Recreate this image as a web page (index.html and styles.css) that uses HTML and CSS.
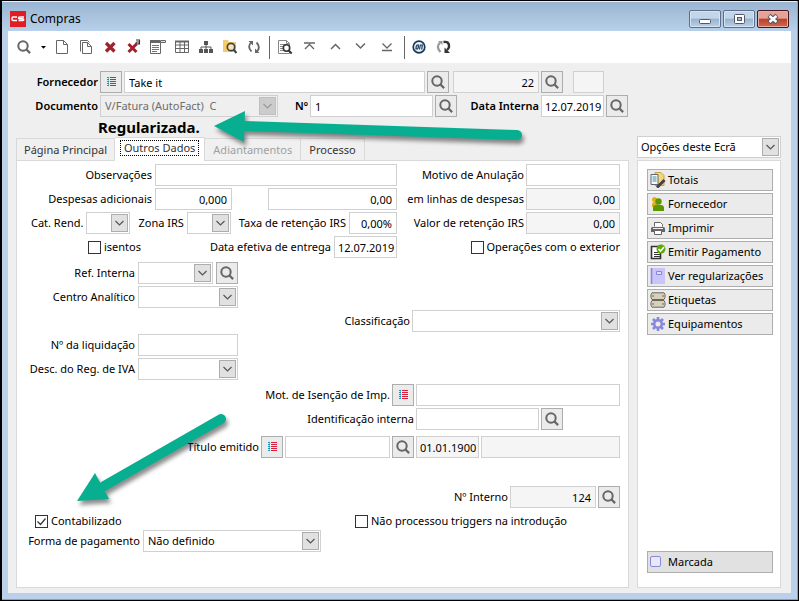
FILE: index.html
```html
<!DOCTYPE html>
<html lang="pt">
<head>
<meta charset="utf-8">
<meta name="viewport" content="width=device-width, initial-scale=1">
<title>Compras</title>
<link rel="stylesheet" href="styles.css">
</head>
<body>
<svg class="defs" aria-hidden="true">
  <symbol id="search" viewBox="0 0 16 16"><circle cx="7" cy="7" r="4.7" fill="none" stroke="#666" stroke-width="2"/><path d="M10.5 10.5l3.6 3.6" stroke="#666" stroke-width="2.2"/></symbol>
</svg>
<div class="window">
  <header class="titlebar">
    <svg class="logo" viewBox="0 0 16 16" aria-hidden="true"><rect width="16" height="16" fill="#e31b23"/><path d="M7 6H3.200Q2 6 2 7v1.500q0 1 1.200 1H7M14 6H9.800Q8.500 6 8.500 6.900q0 .9 1.300.9h2.700q1.200 0 1.200.9t-1.200.9H8.500" fill="none" stroke="#fff" stroke-width="1.500"/></svg>
    <h1>Compras</h1>
    <div class="caption">
      <button type="button" aria-label="Minimizar"><svg viewBox="0 0 30 16"><rect x="9.500" y="8.500" width="11" height="4" rx="1" fill="#fff" stroke="#535666"/></svg></button>
      <button type="button" aria-label="Maximizar"><svg viewBox="0 0 30 16"><rect x="10.500" y="3.500" width="10" height="9" rx="1" fill="#fff" stroke="#535666"/><rect x="13.500" y="6.500" width="4" height="3" fill="#a9bfd6" stroke="#535666"/></svg></button>
      <button type="button" class="close" aria-label="Fechar"><svg viewBox="0 0 30 16"><path d="M11 4.500l8 7M19 4.500l-8 7" stroke="#535666" stroke-width="4.500"/><path d="M11.500 5l7 6M18.500 5l-7 6" stroke="#fff" stroke-width="2.500"/></svg></button>
    </div>
  </header>
  <main class="client">
    <nav class="toolbar" aria-label="Ferramentas">
      <button type="button" aria-label="Procurar"><svg viewBox="0 0 16 16"><use href="#search"/></svg></button>
      <button type="button" class="narrow" aria-label="Mais"><svg viewBox="0 0 16 16"><path d="M6 7h5L8.500 9.700z" fill="#000"/></svg></button>
      <button type="button" aria-label="Novo"><svg viewBox="0 0 16 16"><path d="M2.500 1.500h7l4 4v9h-11zM9.500 1.500v4h4" fill="#fff" stroke="#666"/></svg></button>
      <button type="button" aria-label="Duplicar"><svg viewBox="0 0 16 16"><path d="M4.500 3.500h5l4 4v7h-9zM9.500 3.500v4h4M2.500 12.500v-11h7l2 2" fill="none" stroke="#666"/></svg></button>
      <button type="button" aria-label="Eliminar"><svg viewBox="0 0 16 16"><path d="M4 4l8.500 8.500M12.500 4L4 12.500" stroke="#a3202d" stroke-width="3.200"/></svg></button>
      <button type="button" aria-label="Eliminar todos"><svg viewBox="0 0 16 16"><path d="M2.500 5l8 8M10.500 5l-8 8" stroke="#a3202d" stroke-width="3"/><path d="M10 1h3.500v4.500M13.500 3H11q-1 0-1 1t1 1h1.500l1-1" fill="none" stroke="#333" stroke-width="1.100"/></svg></button>
      <button type="button" aria-label="Formulário"><svg viewBox="0 0 16 16"><path d="M.5 3.500h10v11H.5z" fill="#fff" stroke="#666"/><path d="M0 1h10v3H0z" fill="#666"/><path d="M10.500 1.500h5v2h-5z" fill="#ddd" stroke="#666"/><path d="M2 6.500h7M2 8.500h7M2 10.500h7M2 12.500h5" stroke="#777"/></svg></button>
      <button type="button" aria-label="Tabela"><svg viewBox="0 0 16 16"><path d="M1.500 2.500h13v11h-13zM1.500 6h13M1.500 9.500h13M6 2.500v11M10.500 2.500v11" fill="none" stroke="#666"/><path d="M1 2.500h14" stroke="#666" stroke-width="2"/></svg></button>
      <button type="button" aria-label="Hierarquia"><svg viewBox="0 0 16 16"><path d="M6 2h4v4H6zM1 10h4v4H1zM6 10h4v4H6zM11 10h4v4h-4z" fill="#555"/><path d="M8 6v4M3 10V8h10v2" fill="none" stroke="#555"/></svg></button>
      <button type="button" aria-label="Explorar"><svg viewBox="0 0 16 16"><path d="M1 1h5l1 2h7v10H1z" fill="#f3cd6c"/><circle cx="9" cy="8" r="3.700" fill="#f8e5b0" stroke="#444" stroke-width="1.700"/><path d="M11.500 10.500l3 3.500" stroke="#444" stroke-width="2"/></svg></button>
      <button type="button" aria-label="Atualizar"><svg viewBox="0 0 16 16"><path d="M5.500 12.500Q1 8 5 3.500M10.500 3.500Q15 8 11 12.500" fill="none" stroke="#666" stroke-width="1.800"/><path d="M2.500 2H7v4.500zM13.500 14H9V9.500z" fill="#666"/></svg></button>
      <i class="sep"></i>
      <button type="button" aria-label="Pré-visualizar"><svg viewBox="0 0 16 16"><path d="M1.500 1.500h8l3 3v10h-11zM9.500 1.500v3h3M3 5.500h6M3 7.500h4M3 9.500h3M3 11.500h3" fill="none" stroke="#888"/><circle cx="9.500" cy="9" r="3.200" fill="#fff" stroke="#333" stroke-width="1.600"/><path d="M11.700 11.500l3 3" stroke="#333" stroke-width="2"/></svg></button>
      <button type="button" class="wide" aria-label="Primeiro"><svg viewBox="0 0 16 16"><path d="M2 4h11M3 10l4.500-4.500L12 10" fill="none" stroke="#666" stroke-width="1.300"/></svg></button>
      <button type="button" class="wide" aria-label="Anterior"><svg viewBox="0 0 16 16"><path d="M3 10l4.500-4.500L12 10" fill="none" stroke="#666" stroke-width="1.500"/></svg></button>
      <button type="button" class="wide" aria-label="Seguinte"><svg viewBox="0 0 16 16"><path d="M2 4.500L6.500 9 11 4.500" fill="none" stroke="#666" stroke-width="1.500"/></svg></button>
      <button type="button" class="wide" aria-label="Último"><svg viewBox="0 0 16 16"><path d="M2 11.500h10M2.500 4.500L7 9l4.500-4.500" fill="none" stroke="#666" stroke-width="1.300"/></svg></button>
      <i class="sep"></i>
      <button type="button" aria-label="Ligado"><svg viewBox="0 0 16 16"><circle cx="7" cy="8" r="5.800" fill="#e8f1f8" stroke="#18395c" stroke-width="1.700"/><path d="M6.300 6H5.200l-1 1.500-.2 2.500h1.500l.8-1.500zM7.500 10.500L8.300 6h2l-.6 4.500" fill="none" stroke="#18395c" stroke-width="1.200"/></svg></button>
      <button type="button" aria-label="Repor"><svg viewBox="0 0 16 16"><path d="M4.500 13Q-.5 8 4 3.500" fill="none" stroke="#999" stroke-width="2.200"/><path d="M7.500 3q6-1 5.500 5-.5 2-2 3" fill="none" stroke="#333" stroke-width="2.400"/><path d="M8.500 8.500v5.500H14z" fill="#333"/><path d="M2 2h4.500v4z" fill="#999"/></svg></button>
    </nav>

    <section class="head" aria-label="Cabeçalho">
      <div class="row">
        <label class="lb-head" for="forn">Fornecedor</label>
        <button type="button" class="sq" aria-label="Lista de fornecedores"><svg viewBox="0 0 16 16"><path d="M4 3h2v1H4zM4 5h2v1H4zM4 7h2v1H4zM4 9h2v1H4zM4 11h2v1H4z" fill="#1a96b4"/><path d="M5 4h1v1H5zM5 6h1v1H5zM5 8h1v1H5zM5 10h1v1H5z" fill="#7fc3d3"/><path d="M7 3h6v1H7zM7 5h6v1H7zM7 7h6v1H7zM7 9h6v1H7zM7 11h6v1H7z" fill="#d8213f"/></svg></button>
        <input class="w-name" id="forn" value="Take it">
        <button type="button" class="sq" aria-label="Procurar fornecedor"><svg><use href="#search"/></svg></button>
        <input class="w-code num ro" aria-label="Código" value="22" readonly>
        <button type="button" class="sq" aria-label="Procurar código"><svg><use href="#search"/></svg></button>
        <input class="w-tiny ro" aria-label="Extra" readonly>
      </div>
      <div class="row">
        <label class="lb-head" for="doc">Documento</label>
        <select class="w-doc" id="doc" disabled><option>V/Fatura (AutoFact)&nbsp; C</option></select>
        <label class="lb-num" for="num">Nº</label>
        <input class="w-mid" id="num" value="1">
        <button type="button" class="sq" aria-label="Procurar número"><svg><use href="#search"/></svg></button>
        <label class="lb-date" for="datai">Data Interna</label>
        <input class="w-date" id="datai" value="12.07.2019">
        <button type="button" class="sq" aria-label="Procurar data"><svg><use href="#search"/></svg></button>
      </div>
      <p class="status">Regularizada.</p>
    </section>

    <div class="body">
      <section class="left">
        <div class="tabs" role="tablist">
          <button type="button" role="tab">Página Principal</button>
          <button type="button" role="tab" class="on" aria-selected="true"><span>Outros Dados</span></button>
          <button type="button" role="tab" disabled>Adiantamentos</button>
          <button type="button" role="tab">Processo</button>
        </div>
        <form class="panel">
          <div class="row">
            <label class="lb-a" for="obs">Observações</label>
            <input class="w-obs" id="obs">
            <div class="end"><label for="mot">Motivo de Anulação</label><input class="w-val" id="mot"></div>
          </div>
          <div class="row">
            <label class="lb-a" for="desp">Despesas adicionais</label>
            <div class="pairbox"><input class="w-amt num" id="desp" value="0,000"><input class="w-amt2 num" aria-label="Valor das despesas" value="0,00"></div>
            <div class="end"><label for="lin">em linhas de despesas</label><input class="w-val num ro" id="lin" value="0,00" readonly></div>
          </div>
          <div class="row">
            <div class="half">
              <div class="pair"><label for="cat">Cat. Rend.</label><select class="w-sm" id="cat"><option></option></select></div>
              <div class="pair"><label for="zona">Zona IRS</label><select class="w-sm" id="zona"><option></option></select></div>
              <div class="pair"><label for="taxa">Taxa de retenção IRS</label><input class="w-pct num" id="taxa" value="0,00%"></div>
            </div>
            <div class="end"><label for="ret">Valor de retenção IRS</label><input class="w-val num ro" id="ret" value="0,00" readonly></div>
          </div>
          <div class="row">
            <div class="half spread">
              <label class="check isentos"><input type="checkbox">isentos</label>
              <div class="pair"><label for="efe">Data efetiva de entrega</label><input class="w-date" id="efe" value="12.07.2019"></div>
            </div>
            <label class="check end"><input type="checkbox">Operações com o exterior</label>
          </div>
          <div class="row block">
            <label class="lb-b" for="ref">Ref. Interna</label>
            <select class="w-ref" id="ref"><option></option></select>
            <button type="button" class="sq" aria-label="Procurar referência"><svg><use href="#search"/></svg></button>
          </div>
          <div class="row">
            <label class="lb-b" for="cen">Centro Analítico</label>
            <select class="w-std" id="cen"><option></option></select>
          </div>
          <div class="row">
            <div class="end"><label for="cla">Classificação</label><select class="w-class" id="cla"><option></option></select></div>
          </div>
          <div class="row">
            <label class="lb-b" for="liq">Nº da liquidação</label>
            <input class="w-std" id="liq">
          </div>
          <div class="row">
            <label class="lb-b" for="iva">Desc. do Reg. de IVA</label>
            <select class="w-std" id="iva"><option></option></select>
          </div>
          <div class="row block">
            <div class="end"><label for="ise">Mot. de Isenção de Imp.</label>
              <button type="button" class="sq" aria-label="Lista de motivos"><svg viewBox="0 0 16 16"><path d="M4 3h2v1H4zM4 5h2v1H4zM4 7h2v1H4zM4 9h2v1H4zM4 11h2v1H4z" fill="#1a96b4"/><path d="M5 4h1v1H5zM5 6h1v1H5zM5 8h1v1H5zM5 10h1v1H5z" fill="#7fc3d3"/><path d="M7 3h6v1H7zM7 5h6v1H7zM7 7h6v1H7zM7 9h6v1H7zM7 11h6v1H7z" fill="#d8213f"/></svg></button>
              <div class="col"><input class="grow" id="ise"></div></div>
          </div>
          <div class="row">
            <div class="end"><label for="ide">Identificação interna</label>
              <div class="col"><input class="w-mid" id="ide"><button type="button" class="sq" aria-label="Procurar identificação"><svg><use href="#search"/></svg></button></div></div>
          </div>
          <div class="row title-row">
            <div class="end"><label for="tit">Título emitido</label>
              <button type="button" class="sq" aria-label="Lista de títulos"><svg viewBox="0 0 16 16"><path d="M4 3h2v1H4zM4 5h2v1H4zM4 7h2v1H4zM4 9h2v1H4zM4 11h2v1H4z" fill="#1a96b4"/><path d="M5 4h1v1H5zM5 6h1v1H5zM5 8h1v1H5zM5 10h1v1H5z" fill="#7fc3d3"/><path d="M7 3h6v1H7zM7 5h6v1H7zM7 7h6v1H7zM7 9h6v1H7zM7 11h6v1H7z" fill="#d8213f"/></svg></button>
              <input class="w-tit" id="tit">
              <button type="button" class="sq" aria-label="Procurar título"><svg><use href="#search"/></svg></button>
              <div class="col"><input class="w-date ro" aria-label="Data do título" value="01.01.1900" readonly><input class="grow ro" aria-label="Descrição do título" readonly></div></div>
          </div>
          <div class="row foot">
            <div class="end"><label for="nin">Nº Interno</label><input class="w-code num ro" id="nin" value="124" readonly>
              <button type="button" class="sq" aria-label="Procurar interno"><svg><use href="#search"/></svg></button></div>
          </div>
          <div class="row marks">
            <label class="check contab"><input type="checkbox" checked>Contabilizado</label>
            <label class="check"><input type="checkbox">Não processou triggers na introdução</label>
          </div>
          <div class="row pay">
            <label class="lb-pay" for="pag">Forma de pagamento</label>
            <select class="w-doc" id="pag"><option>Não definido</option></select>
          </div>
          <svg class="arrow arrow-low" viewBox="0 0 170 110" aria-hidden="true"><path d="M148 15L31 82" stroke="#08ae90" stroke-width="10" stroke-linecap="round"/><path d="M4 97l18-28 14 26z" fill="#08ae90"/></svg>
        </form>
      </section>

      <aside class="side">
        <select class="options" aria-label="Opções"><option>Opções deste Ecrã</option></select>
        <div class="actions">
          <button type="button"><svg viewBox="0 0 16 16"><path d="M5 .500h6l3 3v10H5z" fill="#f5d67b" stroke="#c7a245"/><path d="M1 2.500h7v10H1z" fill="#f5fbff" stroke="#666"/><path d="M2.500 5h4M2.500 7h4M2.500 9h4" stroke="#3e8baa"/><path d="M14.500 8L8 14.500l-1 1" stroke="#444" stroke-width="3"/></svg>Totais</button>
          <button type="button"><svg viewBox="0 0 16 16"><circle cx="4.500" cy="3.500" r="2.500" fill="#e2ae18"/><path d="M2 11V8q0-2 3-2h3v5z" fill="#e2ae18"/><circle cx="8.500" cy="5.500" r="3.200" fill="#5b9800"/><path d="M3 15v-3q0-3 3-3h5q3 0 3 3v3z" fill="#5b9800"/></svg>Fornecedor</button>
          <button type="button"><svg viewBox="0 0 16 16"><path d="M4.500 6.500v-4h6l2 2v2" fill="#fff" stroke="#666"/><path d="M1 12V8.500Q1 7 2.500 7h11Q15 7 15 8.500V12z" fill="#666"/><path d="M3 8.500h10" stroke="#eee"/><path d="M4.500 10.500h7v4h-7z" fill="#fff" stroke="#666"/></svg>Imprimir</button>
          <button type="button"><svg viewBox="0 0 16 16"><path d="M1.500 2.500h9v12h-9z" fill="#fff" stroke="#333" stroke-width="1.600"/><path d="M4 8.500h6M4 10.500h6M4 12.500h6" stroke="#333"/><circle cx="11" cy="5" r="4.500" fill="#5fa80c"/><path d="M8.500 5l2 2 3.500-4" fill="none" stroke="#fff" stroke-width="1.700"/></svg>Emitir Pagamento</button>
          <button type="button"><svg viewBox="0 0 16 16"><path d="M1 0h14v16H1z" fill="#c9c5fb"/><path d="M1.500 0v16" stroke="#8a86d8" stroke-width="1.600"/><path d="M6.500 3.500h5v3h-5z" fill="#dedcff" stroke="#8a86d8"/></svg>Ver regularizações</button>
          <button type="button"><svg viewBox="0 0 16 16"><path d="M2 .800h12l1 1.500v3L14 7.500H2l-1-2v-3zM2 8.500h12l1 2v3l-1 1.700H2l-1-1.700v-3z" fill="#d9d0bb" stroke="#6c675d"/><path d="M3 3v2M13 3v2M3 11v2M13 11v2" stroke="#6c675d"/></svg>Etiquetas</button>
          <button type="button"><svg viewBox="0 0 16 16"><circle cx="8" cy="8" r="3.800" fill="none" stroke="#8987dc" stroke-width="2.600"/><path d="M8 1v3M8 12v3M1 8h3M12 8h3M3 3l2 2M11 11l2 2M13 3l-2 2M5 11l-2 2" stroke="#8987dc" stroke-width="2.600"/></svg>Equipamentos</button>
          <button type="button" class="marked"><svg viewBox="0 0 16 16"><rect x=".5" y="2.500" width="10" height="10" rx="1.500" fill="#e9e8f8" stroke="#8987dc"/></svg>Marcada</button>
        </div>
      </aside>
    </div>
    <svg class="arrow arrow-top" viewBox="0 0 320 50" aria-hidden="true"><path d="M34 19L307 28" stroke="#08ae90" stroke-width="10" stroke-linecap="round"/><path d="M4 19L35 4l-1 31z" fill="#08ae90"/></svg>
  </main>
</div>
</body>
</html>
```

FILE: styles.css
```css
* { box-sizing: border-box; }

body {
  margin: 0;
  font: 11px/16px "Noto Sans", "Open Sans", sans-serif;
  color: #000;
}

button, input, select { font: inherit; color: inherit; margin: 0; border-radius: 0; }
h1, p { margin: 0; }
svg { display: block; }
.defs { display: none; }

/* window frame */
.window {
  display: flex;
  flex-direction: column;
  min-height: 100vh;
  padding: 0 7px 7px 6px;
  background: linear-gradient(#99b4d1 0, #b9d1ea 31px);
  border: solid #000;
  border-width: 1px 1px 1px 2px;
  box-shadow: inset -1px -1px #35c0e4, inset 0 1px #e8f1fa;
}

.titlebar { display: flex; align-items: center; gap: 4px; height: 30px; padding: 6px 2px 0; }
.logo { width: 16px; height: 16px; }
.titlebar h1 { font-size: 12px; font-weight: 400; }
.caption { display: flex; gap: 2px; margin-left: auto; }
.caption button {
  width: 32px;
  height: 18px;
  padding: 0;
  border: 1px solid #5f6f8b;
  border-radius: 2px;
  background: linear-gradient(#c3d5e8 45%, #98b3cf 50%, #b9d1e8);
  box-shadow: inset 0 0 0 1px #d6e4f2;
}
.caption svg { width: 30px; height: 16px; }
.caption .close {
  border-color: #4a1420;
  background: linear-gradient(#e3a396 45%, #b9412c 50%, #cf6a4c);
  box-shadow: inset 0 0 0 1px #e8b0a4;
}

.client {
  position: relative;
  flex: 1;
  display: flex;
  flex-direction: column;
  background: #efefef;
}

.toolbar { display: flex; align-items: center; height: 32px; padding-left: 4px; background: #fff; }
.toolbar button {
  display: flex;
  justify-content: center;
  width: 24px;
  padding: 0;
  border: 0;
  background: none;
}
.toolbar .narrow { width: 14px; }
.toolbar .wide { width: 26px; }
.toolbar svg { flex: none; width: 16px; height: 16px; }
.sep { width: 1px; height: 23px; margin: 0 3px; background: #666; }

/* fields */
.row, .end, .pair, .pairbox, .half, .col { display: flex; align-items: center; }
.row { gap: 3px; min-height: 22px; }
.end { gap: 2px; margin-left: auto; }
.pair { gap: 3px; }
.pairbox { justify-content: space-between; width: 242px; }
.half { justify-content: flex-end; gap: 8px; width: 373px; }
.spread { justify-content: space-between; }
.col { gap: 2px; width: 204px; }
.grow { flex: 1; min-width: 0; }
label { white-space: nowrap; }

input:not([type="checkbox"]), select {
  height: 22px;
  padding: 0 4px;
  border: 1px solid #d0d0d0;
  background: #fff;
}
.num { text-align: right; }
input.ro:not([type="checkbox"]) { background: #f5f5f5; }

select {
  appearance: none;
  background: #fff url("data:image/svg+xml,%3Csvg xmlns='http://www.w3.org/2000/svg' width='17' height='18'%3E%3Crect x='.5' y='.5' width='16' height='17' fill='%23e1e1e1' stroke='%23adadad'/%3E%3Cpath d='M4.500 7l4 4 4-4' fill='none' stroke='%23555' stroke-width='1.200'/%3E%3C/svg%3E") no-repeat right 1px center;
}
select:disabled {
  color: #6d6d6d;
  opacity: 1;
  background: #efefef url("data:image/svg+xml,%3Csvg xmlns='http://www.w3.org/2000/svg' width='17' height='18'%3E%3Crect x='.5' y='.5' width='16' height='17' fill='%23ccc' stroke='%23bfbfbf'/%3E%3Cpath d='M4.500 7l4 4 4-4' fill='none' stroke='%23999' stroke-width='1.200'/%3E%3C/svg%3E") no-repeat right 1px center;
}

.sq {
  display: flex;
  align-items: center;
  justify-content: center;
  flex: none;
  width: 22px;
  height: 22px;
  padding: 0;
  border: 1px solid #adadad;
  background: #ebebeb;
}
.sq svg { width: 16px; height: 16px; }

.check { display: flex; align-items: center; gap: 3px; }
.check input {
  appearance: none;
  width: 13px;
  height: 13px;
  border: 1px solid #333;
  background: #fff;
}
.check input:checked {
  background: url("data:image/svg+xml,%3Csvg xmlns='http://www.w3.org/2000/svg' width='11' height='11'%3E%3Cpath d='M1.500 5.500l3 3 5-6' fill='none' stroke='%23333' stroke-width='1.200'/%3E%3C/svg%3E") center no-repeat;
}

.w-name { width: 301px; }
.w-code { width: 86px; }
.w-tiny { width: 31px; margin-left: 8px; }
.w-doc { width: 178px; }
.w-mid { width: 123px; }
input.w-date:not([type="checkbox"]) { width: 63px; padding: 0 0 0 3px; }
.w-obs { width: 242px; }
.w-val { width: 94px; }
.w-amt { width: 77px; }
.w-amt2 { width: 129px; }
.w-sm { width: 44px; }
.w-pct { width: 48px; }
.w-ref { width: 75px; }
.w-std { width: 100px; }
.w-class { width: 208px; }
.w-tit { width: 105px; }

/* header */
.head { display: flex; flex-direction: column; gap: 2px; padding: 8px 16px 0; }
.head label { font-weight: 600; }
.head .row { gap: 2px; }
.head .w-code { margin-left: 2px; }
.lb-head { width: 74px; text-align: right; }
.lb-num { width: 28px; text-align: right; }
.lb-date { width: 80px; text-align: right; }
.status { padding-left: 74px; font-size: 15px; font-weight: 700; line-height: 16px; }

/* tabs and panels */
.body { flex: 1; display: flex; gap: 8px; padding: 0 10px 5px 8px; }
.left { flex: 1; display: flex; flex-direction: column; }
.tabs { display: flex; align-items: flex-end; height: 25px; }
.tabs button {
  height: 22px;
  padding: 0 8px;
  border: 1px solid #d9d9d9;
  border-width: 1px 1px 0 0;
  background: #f0f0f0;
  color: #333;
}
.tabs button:first-child { border-left-width: 1px; padding: 0 7px; }
.tabs button:disabled { color: #a0a0a0; }
.tabs .on { height: 24px; margin-bottom: -1px; padding: 0 5px 3px; background: #fff; z-index: 1; }
.on span { display: block; padding: 0 3px; line-height: 14px; border: 1px dotted #000; }

.panel {
  position: relative;
  flex: 1;
  display: flex;
  flex-direction: column;
  gap: 2px;
  padding: 3px 8px 8px 7px;
  border: 1px solid #d9d9d9;
  background: #fff;
}
.lb-a { width: 128px; text-align: right; }
.lb-b { width: 111px; text-align: right; }
.lb-pay { width: 116px; text-align: right; }
.isentos { margin-left: 64px; }
.block { margin-top: 2px; }
.title-row { margin-top: 4px; }
.foot { margin-top: 26px; }
.marks { padding-left: 11px; }
.contab { width: 317px; }
.pay { margin-top: -4px; }

.side { display: flex; flex-direction: column; width: 144px; padding-top: 1px; }
.options { margin-bottom: 2px; padding: 0 3px; }
.actions {
  flex: 1;
  display: flex;
  flex-direction: column;
  gap: 2px;
  padding: 8px 7px 14px 9px;
  border: 1px solid #d9d9d9;
  background: #fff;
}
.actions button {
  display: flex;
  align-items: center;
  gap: 2px;
  height: 22px;
  padding: 0 2px;
  border: 1px solid #adadad;
  background: #ebebeb;
  text-align: left;
}
.actions svg { width: 16px; height: 16px; }
.actions .marked { margin-top: auto; background: #e1e1e1; }

/* annotation arrows lie over the form */
.arrow { position: absolute; overflow: visible; pointer-events: none; filter: drop-shadow(2px 4px 2px rgba(0, 0, 0, .45)); }
.arrow-top { left: 202px; top: 76px; width: 320px; height: 50px; }
.arrow-low { left: 56px; top: 243px; width: 170px; height: 110px; }
```
